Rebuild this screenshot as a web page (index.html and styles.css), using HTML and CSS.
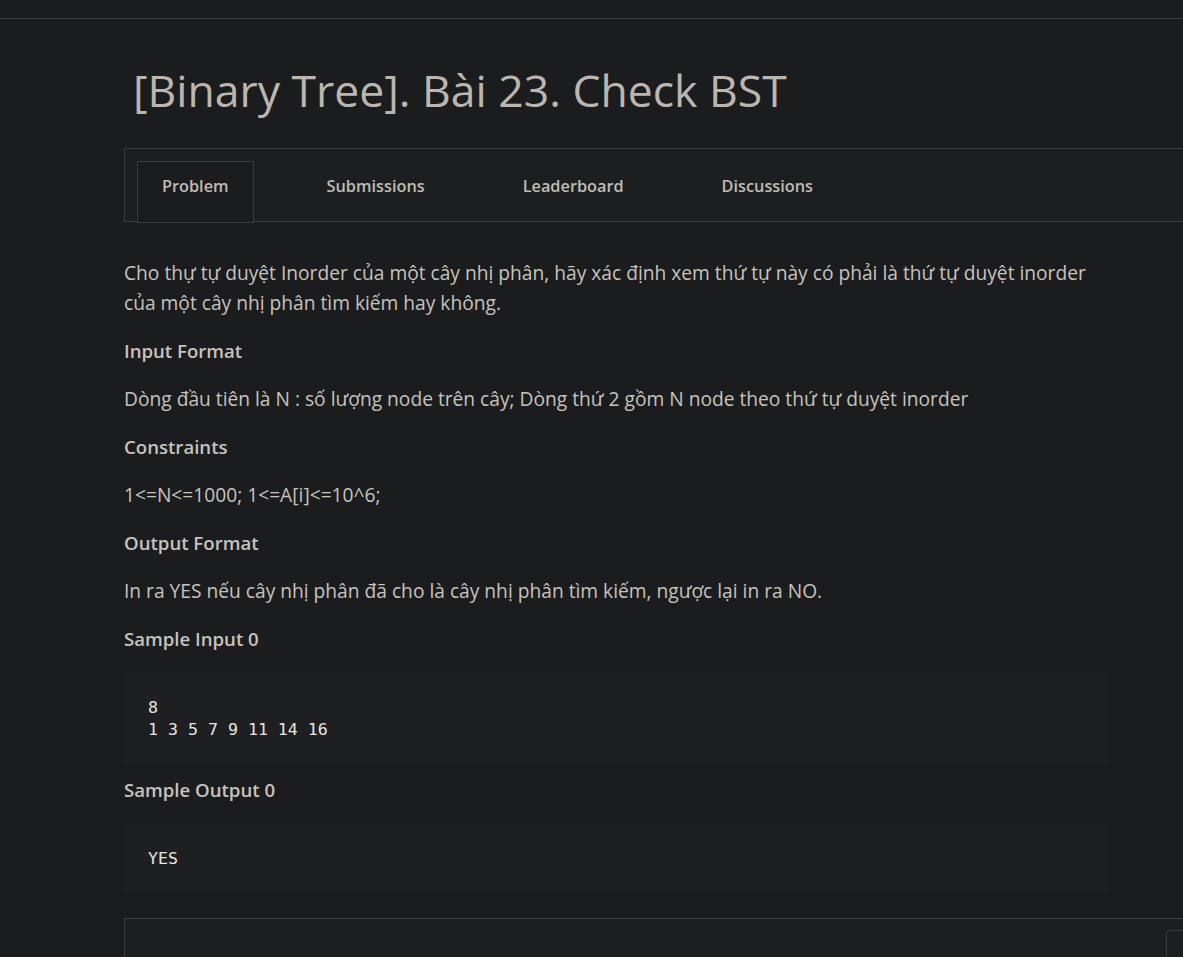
FILE: index.html
```
<!DOCTYPE html>
<html lang="vi">
<head>
<meta charset="utf-8">
<title>[Binary Tree]. Bài 23. Check BST</title>
<link rel="stylesheet" href="styles.css">
</head>
<body>
<div class="topbar"></div>
<main class="page">
  <h1 class="title">[Binary Tree]. Bài 23. Check BST</h1>
  <nav class="tabs">
    <a class="tab active">Problem</a>
    <a class="tab">Submissions</a>
    <a class="tab">Leaderboard</a>
    <a class="tab">Discussions</a>
  </nav>
  <section class="problem">
    <p class="text">Cho thự tự duyệt Inorder của một cây nhị phân, hãy xác định xem thứ tự này có phải là thứ tự duyệt inorder của một cây nhị phân tìm kiếm hay không.</p>
    <h3 class="heading">Input Format</h3>
    <p class="text">Dòng đầu tiên là N : số lượng node trên cây; Dòng thứ 2 gồm N node theo thứ tự duyệt inorder</p>
    <h3 class="heading">Constraints</h3>
    <p class="text">1&lt;=N&lt;=1000; 1&lt;=A[i]&lt;=10^6;</p>
    <h3 class="heading">Output Format</h3>
    <p class="text">In ra YES nếu cây nhị phân đã cho là cây nhị phân tìm kiếm, ngược lại in ra NO.</p>
    <h3 class="heading">Sample Input 0</h3>
    <pre class="code">8
1 3 5 7 9 11 14 16</pre>
    <h3 class="heading">Sample Output 0</h3>
    <pre class="code">YES</pre>
  </section>
  <div class="editor">
    <div class="editor-btn"></div>
  </div>
</main>
</body>
</html>
```
FILE: styles.css
```
html, body {
  margin: 0;
  padding: 0;
  background: #1b1c1e;
  overflow: hidden;
}
body {
  font-family: "Open Sans", "Noto Sans", sans-serif;
  color: #c8c3bc;
  height: 957px;
}
.topbar {
  height: 18px;
  border-bottom: 1px solid #3a3c3f;
}
.page {
  padding-left: 124px;
  width: 1200px;
}
.title {
  margin: 41px 0 28px 9px;
  font-size: 44.5px;
  line-height: 60px;
  font-weight: 400;
  color: #bcb6ae;
}
.tabs {
  display: flex;
  border: 1px solid #3a3d40;
  background: #1c1f20;
  padding: 12px 0 0 12px;
  height: 60px;
}
.tab {
  display: block;
  box-sizing: border-box;
  height: 62px;
  padding: 12px 24px 0 24px;
  margin-right: 48px;
  border: 1px solid transparent;
  font-size: 16.3px;
  line-height: 24px;
  font-weight: 600;
  color: #c1bbb3;
}
.tab.active {
  background: #1b1c1e;
  border-color: #3a3d40;
}
.problem {
  width: 984px;
  padding-top: 36px;
}
.text {
  margin: 0 0 18px;
  font-size: 19.2px;
  line-height: 30px;
}
.heading {
  margin: 0 0 18px;
  font-size: 18.6px;
  line-height: 30px;
  font-weight: 600;
}
.code {
  margin: 19px 0 12px;
  padding: 24px 24px 22px;
  background: #1e1f21;
  font-family: "DejaVu Sans Mono", monospace;
  font-size: 16.6px;
  line-height: 22px;
  color: #e6e4e1;
}
.editor {
  margin-top: 26px;
  border-top: 1px solid #3a3d40;
  border-left: 1px solid #3a3d40;
  background: #1c1f20;
  height: 80px;
  position: relative;
}
.editor-btn {
  position: absolute;
  left: 1041px;
  top: 11px;
  width: 60px;
  height: 40px;
  border: 1px solid #3a3d40;
  border-radius: 4px;
}
```
